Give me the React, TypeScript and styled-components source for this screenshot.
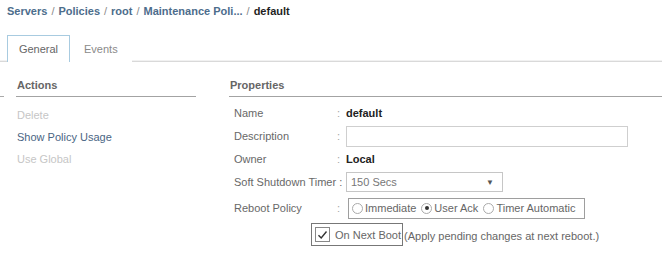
import React from 'react';
import styled, { createGlobalStyle } from 'styled-components';

const GlobalStyle = createGlobalStyle`
  body {
    margin: 0;
    background: #fff;
    font-family: "Liberation Sans", Arial, sans-serif;
  }
`;

const crumbs = ['Servers', 'Policies', 'root', 'Maintenance Poli...'];

const actions = [
    { text: 'Delete', enabled: false },
    { text: 'Show Policy Usage', enabled: true },
    { text: 'Use Global', enabled: false },
];

const rebootOptions = [
    { text: 'Immediate', checked: false },
    { text: 'User Ack', checked: true },
    { text: 'Timer Automatic', checked: false },
];

const App = () => {
    return (
        <Page>
            <GlobalStyle />
            <Breadcrumb>
                {crumbs.map((c) => (
                    <React.Fragment key={c}>
                        <Crumb>{c}</Crumb>
                        <Sep>/</Sep>
                    </React.Fragment>
                ))}
                <Crumb $current>default</Crumb>
            </Breadcrumb>

            <TabBar>
                <Tab $active>General</Tab>
                <Tab>Events</Tab>
            </TabBar>

            <Body>
                <Side>
                    <SectionTitle>Actions</SectionTitle>
                    <ActionList>
                        {actions.map((a) => (
                            <ActionItem key={a.text} $enabled={a.enabled}>{a.text}</ActionItem>
                        ))}
                    </ActionList>
                </Side>

                <Main>
                    <SectionTitle>Properties</SectionTitle>
                    <PropGrid>
                        <Label $h={22}>Name</Label>
                        <Colon>:</Colon>
                        <Value>default</Value>

                        <Label $h={24}>Description</Label>
                        <Colon>:</Colon>
                        <Cell><TextBox /></Cell>

                        <Label $h={21}>Owner</Label>
                        <Colon>:</Colon>
                        <Value>Local</Value>

                        <Label $h={26}>Soft Shutdown Timer :</Label>
                        <span />
                        <Cell>
                            <Select>
                                <span>150 Secs</span>
                                <Arrow>▼</Arrow>
                            </Select>
                        </Cell>

                        <Label $h={26}>Reboot Policy</Label>
                        <Colon>:</Colon>
                        <Cell>
                            <RadioGroup>
                                {rebootOptions.map((o) => (
                                    <RadioOption key={o.text}>
                                        <RadioCircle $checked={o.checked} />
                                        {o.text}
                                    </RadioOption>
                                ))}
                            </RadioGroup>
                        </Cell>
                    </PropGrid>

                    <BootRow>
                        <BootBox>
                            <CheckBox>
                                <svg width="11" height="10" viewBox="0 0 11 10">
                                    <path d="M1.5 5.2 L4.2 8 L9.5 1.5" fill="none" stroke="#333" strokeWidth="1.4" />
                                </svg>
                            </CheckBox>
                            On Next Boot
                        </BootBox>
                        <BootNote>(Apply pending changes at next reboot.)</BootNote>
                    </BootRow>
                </Main>
            </Body>
        </Page>
    );
};

const Page = styled.div`
  width: 662px;
  height: 277px;
  overflow: hidden;
  color: #666;
  font-size: 11px;
`;

const Breadcrumb = styled.div`
  display: flex;
  align-items: center;
  padding: 3px 7px 0;
  height: 15px;
  font-size: 11px;
  font-weight: bold;
`;

const Crumb = styled.span<{ $current?: boolean }>`
  color: ${(p) => (p.$current ? '#1f1f1f' : '#4d6d8c')};
`;

const Sep = styled.span`
  color: #8a8a8a;
  font-weight: normal;
  margin: 0 4px;
`;

const TabBar = styled.div`
  display: flex;
  margin-top: 17px;
  padding-left: 7px;
  border-bottom: 1px solid #d9d9d9;
  box-shadow: 0 -3px 0 -2px #f1f1f1 inset;
  height: 26px;
`;

const Tab = styled.div<{ $active?: boolean }>`
  display: flex;
  align-items: center;
  justify-content: center;
  width: ${(p) => (p.$active ? '61px' : 'auto')};
  padding: ${(p) => (p.$active ? '0' : '0 13px')};
  height: 26px;
  margin-bottom: -1px;
  background: #fff;
  border: 1px solid ${(p) => (p.$active ? '#a8cbe0' : 'transparent')};
  border-bottom: none;
  color: ${(p) => (p.$active ? '#666' : '#8a8a8a')};
  font-size: 11px;
`;

const Body = styled.div`
  display: flex;
  padding-top: 16px;
`;

const Side = styled.div`
  width: 180px;
  margin-left: 16px;
  position: relative;

  &::before {
    content: '';
    position: absolute;
    left: -16px;
    top: 18px;
    width: 4px;
    border-top: 1px solid #aaa;
  }
`;

const Main = styled.div`
  flex: 1;
  margin-left: 33px;
`;

const SectionTitle = styled.div`
  font-size: 11px;
  font-weight: bold;
  color: #666;
  line-height: 14px;
  padding: 0 0 4px 1px;
  border-bottom: 1px solid #a3a3a3;
`;

const ActionList = styled.div`
  display: flex;
  flex-direction: column;
  padding: 7px 0 0 1px;
`;

const ActionItem = styled.div<{ $enabled: boolean }>`
  line-height: 22px;
  color: ${(p) => (p.$enabled ? '#4a6584' : '#c6c6c6')};
`;

const PropGrid = styled.div`
  display: grid;
  grid-template-columns: 103px 9px 1fr;
  align-items: center;
  padding: 5px 0 0 5px;
`;

const Label = styled.div<{ $h: number }>`
  height: ${(p) => p.$h}px;
  display: flex;
  align-items: center;
  color: #686868;
  white-space: nowrap;
`;

const Colon = styled.span`
  color: #a5a5a5;
`;

const Value = styled.div`
  font-weight: bold;
  color: #222;
`;

const Cell = styled.div`
  display: flex;
  align-items: center;
`;

const TextBox = styled.div`
  width: 280px;
  height: 19px;
  border: 1px solid #cfcfcf;
  background: #fff;
`;

const Select = styled.div`
  width: 143px;
  height: 18px;
  border: 1px solid #c6c6c6;
  display: flex;
  align-items: center;
  justify-content: space-between;
  padding: 0 8px 0 4px;
  color: #777;
`;

const Arrow = styled.span`
  font-size: 8px;
  color: #555;
`;

const RadioGroup = styled.div`
  margin-left: 2px;
  width: 232px;
  height: 19px;
  border: 1px solid #9e9e9e;
  display: flex;
  align-items: center;
  gap: 5px;
  padding-left: 3px;
  color: #666;
`;

const RadioOption = styled.div`
  display: flex;
  align-items: center;
  gap: 2px;
`;

const RadioCircle = styled.span<{ $checked: boolean }>`
  width: 11px;
  height: 11px;
  border-radius: 50%;
  border: 1px solid #aaa;
  box-sizing: border-box;
  display: inline-flex;
  align-items: center;
  justify-content: center;

  &::after {
    content: '';
    display: ${(p) => (p.$checked ? 'block' : 'none')};
    width: 4px;
    height: 4px;
    border-radius: 50%;
    background: #333;
  }
`;

const BootRow = styled.div`
  display: flex;
  align-items: flex-end;
  margin-top: 2px;
  padding-left: 82px;
`;

const BootBox = styled.div`
  display: flex;
  align-items: center;
  gap: 5px;
  height: 21px;
  border: 1px solid #777;
  padding: 0 1px 0 3px;
  color: #666;
  white-space: nowrap;
`;

const CheckBox = styled.span`
  width: 13px;
  height: 13px;
  border: 1px solid #888;
  display: inline-flex;
  align-items: center;
  justify-content: center;
`;

const BootNote = styled.span`
  color: #666;
  padding-bottom: 4px;
  margin-left: 1px;
`;

export default App;
